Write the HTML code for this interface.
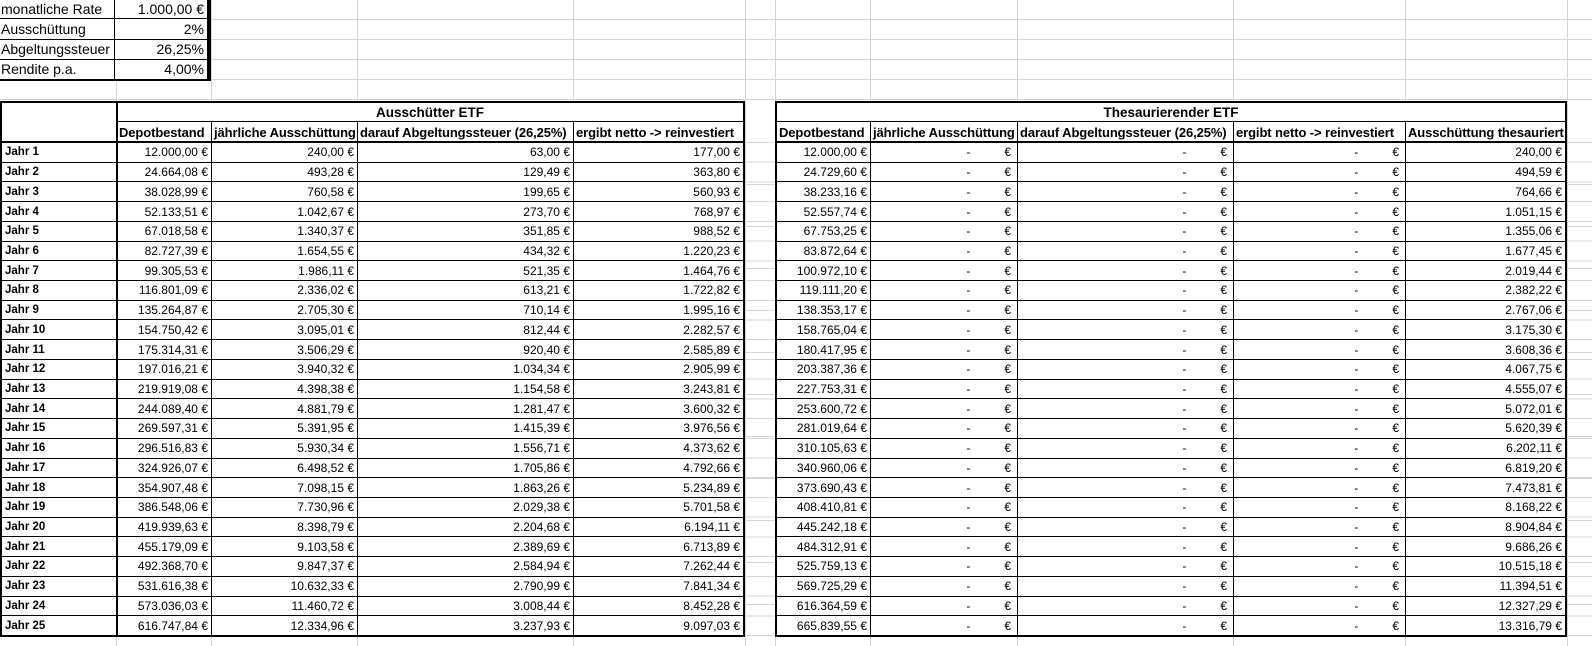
<!DOCTYPE html>
<html><head><meta charset="utf-8"><style>
*{box-sizing:border-box;margin:0;padding:0}
body{width:1592px;height:646px;position:relative;overflow:hidden;background:#fff;font-family:"Liberation Sans",Arial,sans-serif;font-size:12px;color:#000}
.bg{position:absolute;left:0;top:0;width:1592px;height:646px;
background-image:repeating-linear-gradient(to bottom,transparent 0,transparent 19px,#d4d4d4 19px,#d4d4d4 20px);background-size:100% 100px;background-repeat:no-repeat}
.band{position:absolute;left:0;top:101px;width:1592px;height:545px;
background-image:repeating-linear-gradient(to bottom,transparent 0,transparent 41px,#d4d4d4 41px,#d4d4d4 42px);}
.band2{position:absolute;left:0;top:143px;width:1592px;height:503px;
background-image:repeating-linear-gradient(to bottom,transparent 0,transparent 18.72px,#d4d4d4 18.72px,#d4d4d4 19.72px);}
.v{position:absolute;top:0;width:1px;height:646px;background:#d4d4d4}
.g{position:absolute;display:grid;gap:1px;background:#000;border:2px solid #000}
.g>div{background:#fff;display:flex;align-items:center;justify-content:flex-end;padding:0 3px;white-space:nowrap;overflow:hidden}
.g>div.l{justify-content:flex-start}
.g>div.c{justify-content:center;font-weight:bold;font-size:13.5px}
.g>div.h{justify-content:flex-start;font-weight:bold;font-size:13px;padding:0 2px;letter-spacing:-0.1px}
.g>div.j{justify-content:flex-start;font-weight:bold;font-size:11.5px}
.g>div.lab{font-size:14px}
.g>div.d{padding-right:6px}
.g>div.d span{margin-right:34px}
.t1{left:-2px;top:-2px;width:213px;height:83px;border-top:0;border-left:0;grid-template-columns:116px 92px;grid-template-rows:repeat(4,1fr);padding-top:1px}
.L{left:0;top:101px;width:745px;height:536px;grid-template-columns:114px 94px 145px 215px 169px;grid-template-rows:18px 20px repeat(25,1fr)}
.R{left:775px;top:101px;width:792px;height:536px;grid-template-columns:93px 146px 215px 171px 159px;grid-template-rows:18px 20px repeat(25,1fr)}
.k{position:absolute;background:#000}
</style></head><body>
<div class="bg"></div><div class="band"></div><div class="band2"></div>
<div class="v" style="left:116px"></div><div class="v" style="left:211px"></div><div class="v" style="left:357px"></div><div class="v" style="left:573px"></div><div class="v" style="left:745px"></div><div class="v" style="left:775px"></div><div class="v" style="left:870px"></div><div class="v" style="left:1017px"></div><div class="v" style="left:1233px"></div><div class="v" style="left:1405px"></div><div class="v" style="left:1567px"></div>

<div class="g t1">
<div class="l lab">monatliche Rate</div><div class="lab">1.000,00 €</div>
<div class="l lab">Ausschüttung</div><div class="lab">2%</div>
<div class="l lab">Abgeltungssteuer</div><div class="lab">26,25%</div>
<div class="l lab">Rendite p.a.</div><div class="lab">4,00%</div>
</div>

<div class="g L">
<div style="grid-row:1/3"></div><div class="c" style="grid-column:2/6">Ausschütter ETF</div>
<div class="h">Depotbestand</div><div class="h">jährliche Ausschüttung</div><div class="h">darauf Abgeltungssteuer (26,25%)</div><div class="h">ergibt netto -&gt; reinvestiert</div>
<div class="j">Jahr 1</div><div>12.000,00 €</div><div>240,00 €</div><div>63,00 €</div><div>177,00 €</div>
<div class="j">Jahr 2</div><div>24.664,08 €</div><div>493,28 €</div><div>129,49 €</div><div>363,80 €</div>
<div class="j">Jahr 3</div><div>38.028,99 €</div><div>760,58 €</div><div>199,65 €</div><div>560,93 €</div>
<div class="j">Jahr 4</div><div>52.133,51 €</div><div>1.042,67 €</div><div>273,70 €</div><div>768,97 €</div>
<div class="j">Jahr 5</div><div>67.018,58 €</div><div>1.340,37 €</div><div>351,85 €</div><div>988,52 €</div>
<div class="j">Jahr 6</div><div>82.727,39 €</div><div>1.654,55 €</div><div>434,32 €</div><div>1.220,23 €</div>
<div class="j">Jahr 7</div><div>99.305,53 €</div><div>1.986,11 €</div><div>521,35 €</div><div>1.464,76 €</div>
<div class="j">Jahr 8</div><div>116.801,09 €</div><div>2.336,02 €</div><div>613,21 €</div><div>1.722,82 €</div>
<div class="j">Jahr 9</div><div>135.264,87 €</div><div>2.705,30 €</div><div>710,14 €</div><div>1.995,16 €</div>
<div class="j">Jahr 10</div><div>154.750,42 €</div><div>3.095,01 €</div><div>812,44 €</div><div>2.282,57 €</div>
<div class="j">Jahr 11</div><div>175.314,31 €</div><div>3.506,29 €</div><div>920,40 €</div><div>2.585,89 €</div>
<div class="j">Jahr 12</div><div>197.016,21 €</div><div>3.940,32 €</div><div>1.034,34 €</div><div>2.905,99 €</div>
<div class="j">Jahr 13</div><div>219.919,08 €</div><div>4.398,38 €</div><div>1.154,58 €</div><div>3.243,81 €</div>
<div class="j">Jahr 14</div><div>244.089,40 €</div><div>4.881,79 €</div><div>1.281,47 €</div><div>3.600,32 €</div>
<div class="j">Jahr 15</div><div>269.597,31 €</div><div>5.391,95 €</div><div>1.415,39 €</div><div>3.976,56 €</div>
<div class="j">Jahr 16</div><div>296.516,83 €</div><div>5.930,34 €</div><div>1.556,71 €</div><div>4.373,62 €</div>
<div class="j">Jahr 17</div><div>324.926,07 €</div><div>6.498,52 €</div><div>1.705,86 €</div><div>4.792,66 €</div>
<div class="j">Jahr 18</div><div>354.907,48 €</div><div>7.098,15 €</div><div>1.863,26 €</div><div>5.234,89 €</div>
<div class="j">Jahr 19</div><div>386.548,06 €</div><div>7.730,96 €</div><div>2.029,38 €</div><div>5.701,58 €</div>
<div class="j">Jahr 20</div><div>419.939,63 €</div><div>8.398,79 €</div><div>2.204,68 €</div><div>6.194,11 €</div>
<div class="j">Jahr 21</div><div>455.179,09 €</div><div>9.103,58 €</div><div>2.389,69 €</div><div>6.713,89 €</div>
<div class="j">Jahr 22</div><div>492.368,70 €</div><div>9.847,37 €</div><div>2.584,94 €</div><div>7.262,44 €</div>
<div class="j">Jahr 23</div><div>531.616,38 €</div><div>10.632,33 €</div><div>2.790,99 €</div><div>7.841,34 €</div>
<div class="j">Jahr 24</div><div>573.036,03 €</div><div>11.460,72 €</div><div>3.008,44 €</div><div>8.452,28 €</div>
<div class="j">Jahr 25</div><div>616.747,84 €</div><div>12.334,96 €</div><div>3.237,93 €</div><div>9.097,03 €</div>
</div>

<div class="g R">
<div class="c" style="grid-column:1/6">Thesaurierender ETF</div>
<div class="h">Depotbestand</div><div class="h">jährliche Ausschüttung</div><div class="h">darauf Abgeltungssteuer (26,25%)</div><div class="h">ergibt netto -&gt; reinvestiert</div><div class="h">Ausschüttung thesauriert</div>
<div>12.000,00 €</div><div class="d"><span>-</span>€</div><div class="d"><span>-</span>€</div><div class="d"><span>-</span>€</div><div>240,00 €</div>
<div>24.729,60 €</div><div class="d"><span>-</span>€</div><div class="d"><span>-</span>€</div><div class="d"><span>-</span>€</div><div>494,59 €</div>
<div>38.233,16 €</div><div class="d"><span>-</span>€</div><div class="d"><span>-</span>€</div><div class="d"><span>-</span>€</div><div>764,66 €</div>
<div>52.557,74 €</div><div class="d"><span>-</span>€</div><div class="d"><span>-</span>€</div><div class="d"><span>-</span>€</div><div>1.051,15 €</div>
<div>67.753,25 €</div><div class="d"><span>-</span>€</div><div class="d"><span>-</span>€</div><div class="d"><span>-</span>€</div><div>1.355,06 €</div>
<div>83.872,64 €</div><div class="d"><span>-</span>€</div><div class="d"><span>-</span>€</div><div class="d"><span>-</span>€</div><div>1.677,45 €</div>
<div>100.972,10 €</div><div class="d"><span>-</span>€</div><div class="d"><span>-</span>€</div><div class="d"><span>-</span>€</div><div>2.019,44 €</div>
<div>119.111,20 €</div><div class="d"><span>-</span>€</div><div class="d"><span>-</span>€</div><div class="d"><span>-</span>€</div><div>2.382,22 €</div>
<div>138.353,17 €</div><div class="d"><span>-</span>€</div><div class="d"><span>-</span>€</div><div class="d"><span>-</span>€</div><div>2.767,06 €</div>
<div>158.765,04 €</div><div class="d"><span>-</span>€</div><div class="d"><span>-</span>€</div><div class="d"><span>-</span>€</div><div>3.175,30 €</div>
<div>180.417,95 €</div><div class="d"><span>-</span>€</div><div class="d"><span>-</span>€</div><div class="d"><span>-</span>€</div><div>3.608,36 €</div>
<div>203.387,36 €</div><div class="d"><span>-</span>€</div><div class="d"><span>-</span>€</div><div class="d"><span>-</span>€</div><div>4.067,75 €</div>
<div>227.753,31 €</div><div class="d"><span>-</span>€</div><div class="d"><span>-</span>€</div><div class="d"><span>-</span>€</div><div>4.555,07 €</div>
<div>253.600,72 €</div><div class="d"><span>-</span>€</div><div class="d"><span>-</span>€</div><div class="d"><span>-</span>€</div><div>5.072,01 €</div>
<div>281.019,64 €</div><div class="d"><span>-</span>€</div><div class="d"><span>-</span>€</div><div class="d"><span>-</span>€</div><div>5.620,39 €</div>
<div>310.105,63 €</div><div class="d"><span>-</span>€</div><div class="d"><span>-</span>€</div><div class="d"><span>-</span>€</div><div>6.202,11 €</div>
<div>340.960,06 €</div><div class="d"><span>-</span>€</div><div class="d"><span>-</span>€</div><div class="d"><span>-</span>€</div><div>6.819,20 €</div>
<div>373.690,43 €</div><div class="d"><span>-</span>€</div><div class="d"><span>-</span>€</div><div class="d"><span>-</span>€</div><div>7.473,81 €</div>
<div>408.410,81 €</div><div class="d"><span>-</span>€</div><div class="d"><span>-</span>€</div><div class="d"><span>-</span>€</div><div>8.168,22 €</div>
<div>445.242,18 €</div><div class="d"><span>-</span>€</div><div class="d"><span>-</span>€</div><div class="d"><span>-</span>€</div><div>8.904,84 €</div>
<div>484.312,91 €</div><div class="d"><span>-</span>€</div><div class="d"><span>-</span>€</div><div class="d"><span>-</span>€</div><div>9.686,26 €</div>
<div>525.759,13 €</div><div class="d"><span>-</span>€</div><div class="d"><span>-</span>€</div><div class="d"><span>-</span>€</div><div>10.515,18 €</div>
<div>569.725,29 €</div><div class="d"><span>-</span>€</div><div class="d"><span>-</span>€</div><div class="d"><span>-</span>€</div><div>11.394,51 €</div>
<div>616.364,59 €</div><div class="d"><span>-</span>€</div><div class="d"><span>-</span>€</div><div class="d"><span>-</span>€</div><div>12.327,29 €</div>
<div>665.839,55 €</div><div class="d"><span>-</span>€</div><div class="d"><span>-</span>€</div><div class="d"><span>-</span>€</div><div>13.316,79 €</div>
</div>

<div class="k" style="left:0;top:141px;width:745px;height:2px"></div>
<div class="k" style="left:116px;top:101px;width:2px;height:536px"></div>
<div class="k" style="left:775px;top:141px;width:792px;height:2px"></div>
</body></html>
